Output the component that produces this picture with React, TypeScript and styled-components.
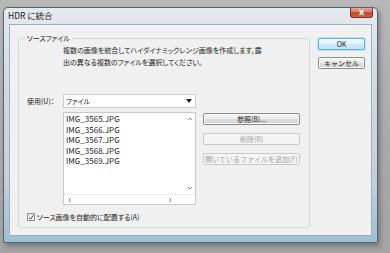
import styled, { createGlobalStyle } from "styled-components";

const GlobalStyle = createGlobalStyle`
  html, body {
    margin: 0;
    padding: 0;
  }
  body {
    background: #a8a8a8;
    font-family: "Noto Sans CJK JP", "Noto Sans", sans-serif;
    font-feature-settings: "palt";
    color: #1c1c1c;
  }
`;

const files = [
  "IMG_3565.JPG",
  "IMG_3566.JPG",
  "IMG_3567.JPG",
  "IMG_3568.JPG",
  "IMG_3569.JPG",
];

const Chevron = ({ dir }: { dir: "up" | "down" | "left" | "right" }) => {
  const d = {
    up: "M1 4 L3 2 L5 4",
    down: "M1 2 L3 4 L5 2",
    left: "M4 1 L2 3 L4 5",
    right: "M2 1 L4 3 L2 5",
  }[dir];
  return (
    <svg width="6" height="6" viewBox="0 0 6 6">
      <path d={d} fill="none" stroke="#8a8a8a" strokeWidth="1" />
    </svg>
  );
};

const App = () => {
  return (
    <>
      <GlobalStyle />
      <Backdrop>
        <Window>
          <TitleBar>
            <Title>HDR に統合</Title>
            <CloseButton>
              <svg width="9" height="7" viewBox="0 0 9 7">
                <path d="M2.5 1 L6.5 6 M6.5 1 L2.5 6" stroke="#fff" strokeWidth="1.5" />
              </svg>
            </CloseButton>
          </TitleBar>
          <Client>
            <Group>
              <Legend>ソースファイル</Legend>
              <Description>
                複数の画像を統合してハイダイナミックレンジ画像を作成します。露
                <br />
                出の異なる複数のファイルを選択してください。
              </Description>
              <UseRow>
                <FieldLabel>使用(U)：</FieldLabel>
                <Select>
                  <span>ファイル</span>
                  <svg width="6" height="4" viewBox="0 0 6 4">
                    <path d="M0 0 H6 L3 4 Z" fill="#222" />
                  </svg>
                </Select>
              </UseRow>
              <ListRow>
                <ListBox>
                  <Items>
                    {files.map((f) => (
                      <Item key={f}>{f}</Item>
                    ))}
                  </Items>
                  <VScroll>
                    <Chevron dir="up" />
                    <Chevron dir="down" />
                  </VScroll>
                  <HScroll>
                    <Chevron dir="left" />
                    <Chevron dir="right" />
                  </HScroll>
                  <Corner />
                </ListBox>
                <SideButtons>
                  <PushButton>参照(B)...</PushButton>
                  <PushButton disabled>削除(R)</PushButton>
                  <PushButton disabled>開いているファイルを追加(F)</PushButton>
                </SideButtons>
              </ListRow>
              <CheckRow>
                <CheckBox>
                  <svg width="7" height="7" viewBox="0 0 7 7">
                    <path d="M1 3.5 L3 5.5 L6 1" fill="none" stroke="#333" strokeWidth="1.1" />
                  </svg>
                </CheckBox>
                <span>ソース画像を自動的に配置する(A)</span>
              </CheckRow>
            </Group>
            <DialogButtons>
              <PushButton $default>OK</PushButton>
              <PushButton>キャンセル</PushButton>
            </DialogButtons>
          </Client>
        </Window>
      </Backdrop>
    </>
  );
};

export default App;

const Backdrop = styled.div`
  width: 390px;
  height: 253px;
  box-sizing: border-box;
  padding: 7px 12px 0 3px;
  background: linear-gradient(180deg, #b8b8b8 0%, #a9a9a9 60%, #a4a4a4 100%);
  overflow: hidden;
`;

const Window = styled.div`
  width: 375px;
  height: 236px;
  box-sizing: border-box;
  display: flex;
  flex-direction: column;
  padding: 0 5px 6px 5px;
  border: 1px solid #56636f;
  border-radius: 5px 5px 1px 1px;
  background: linear-gradient(180deg, #e4e9ee 0%, #d2dbe3 30%, #bfcfdc 75%, #9cc0d6 100%);
  box-shadow: 2px 3px 5px rgba(0, 0, 0, 0.3);
`;

const TitleBar = styled.div`
  height: 16px;
  display: flex;
  align-items: flex-start;
  justify-content: space-between;
`;

const Title = styled.div`
  margin-left: -1px;
  line-height: 15px;
  font-size: 8.5px;
  color: #222;
`;

const CloseButton = styled.div`
  width: 23px;
  height: 10px;
  margin-right: -1px;
  box-sizing: border-box;
  display: flex;
  align-items: center;
  justify-content: center;
  border: 1px solid #7a3428;
  border-top: none;
  border-radius: 0 0 3px 3px;
  background: linear-gradient(180deg, #e9a795 0%, #d8735d 45%, #c2412a 55%, #d4604a 100%);
`;

const Client = styled.div`
  flex: 1;
  display: flex;
  gap: 8px;
  padding: 9px 6px 7px 8px;
  border: 1px solid #9cb0c0;
  background: #f0f0f0;
`;

const Group = styled.fieldset`
  width: 292px;
  box-sizing: border-box;
  min-width: 0;
  margin: 0;
  padding: 2px 0 5px 8px;
  border: 1px solid #ced8df;
  border-radius: 3px;
  font-size: 7px;
`;

const Legend = styled.legend`
  margin-left: -2px;
  padding: 0 2px;
  font-size: 7px;
  line-height: 8px;
`;

const Description = styled.div`
  margin-left: 36px;
  line-height: 12px;
  white-space: nowrap;
`;

const UseRow = styled.div`
  margin-top: 26px;
  height: 14px;
  display: flex;
  align-items: center;
`;

const FieldLabel = styled.div`
  width: 36px;
  white-space: nowrap;
`;

const Select = styled.div`
  width: 133px;
  height: 14px;
  box-sizing: border-box;
  display: flex;
  align-items: center;
  justify-content: space-between;
  padding: 0 3px 0 2px;
  border: 1px solid #cdcdcd;
  background: #fff;
`;

const ListRow = styled.div`
  margin-top: 4px;
  margin-left: 36px;
  display: flex;
  gap: 7px;
`;

const ListBox = styled.div`
  width: 133px;
  height: 93px;
  box-sizing: border-box;
  display: grid;
  grid-template-columns: 1fr 10px;
  grid-template-rows: 1fr 10px;
  border: 1px solid #c8c8c8;
  background: #fff;
`;

const Items = styled.div`
  padding: 1px 0 0 2px;
  font-size: 8px;
  line-height: 10.5px;
`;

const Item = styled.div`
  white-space: nowrap;
`;

const VScroll = styled.div`
  display: flex;
  flex-direction: column;
  justify-content: space-between;
  align-items: center;
  padding: 3px 0;
`;

const HScroll = styled.div`
  display: flex;
  justify-content: space-between;
  align-items: center;
  padding: 0 12px 0 3px;
  border-top: 1px solid #ececec;
`;

const Corner = styled.div`
  border-top: 1px solid #ececec;
`;

const SideButtons = styled.div`
  width: 97px;
  margin-top: 1px;
  display: flex;
  flex-direction: column;
  gap: 8px;
`;

const PushButton = styled.button<{ $default?: boolean }>`
  height: 12px;
  width: 100%;
  padding: 0;
  box-sizing: border-box;
  font-family: inherit;
  font-size: 7px;
  line-height: 10px;
  color: #1c1c1c;
  white-space: nowrap;
  border-radius: 2px;
  border: 1px solid ${(p) => (p.$default ? "#5bb3df" : "#8c8c8c")};
  background: ${(p) =>
    p.$default
      ? "linear-gradient(180deg, #f2f9fd 0%, #e0f1fb 50%, #cde9f8 51%, #c4e4f6 100%)"
      : "linear-gradient(180deg, #f6f6f6 0%, #ebebeb 50%, #dcdcdc 51%, #d4d4d4 100%)"};
  box-shadow: ${(p) => (p.$default ? "0 0 0 1px #b9e0f3" : "inset 0 0 0 1px #fbfbfb")};

  &:disabled {
    color: #a4a4a4;
    border-color: #c9c9c9;
    background: #f4f4f4;
    box-shadow: none;
  }
`;

const CheckRow = styled.div`
  margin-top: 7px;
  height: 10px;
  display: flex;
  align-items: center;
  gap: 2px;
`;

const CheckBox = styled.div`
  width: 8px;
  height: 8px;
  box-sizing: border-box;
  display: flex;
  align-items: center;
  justify-content: center;
  border: 1px solid #8e8f8f;
  background: linear-gradient(180deg, #e6e6e6, #fbfbfb);
`;

const DialogButtons = styled.div`
  width: 47px;
  margin-top: 4px;
  display: flex;
  flex-direction: column;
  gap: 7px;
`;
